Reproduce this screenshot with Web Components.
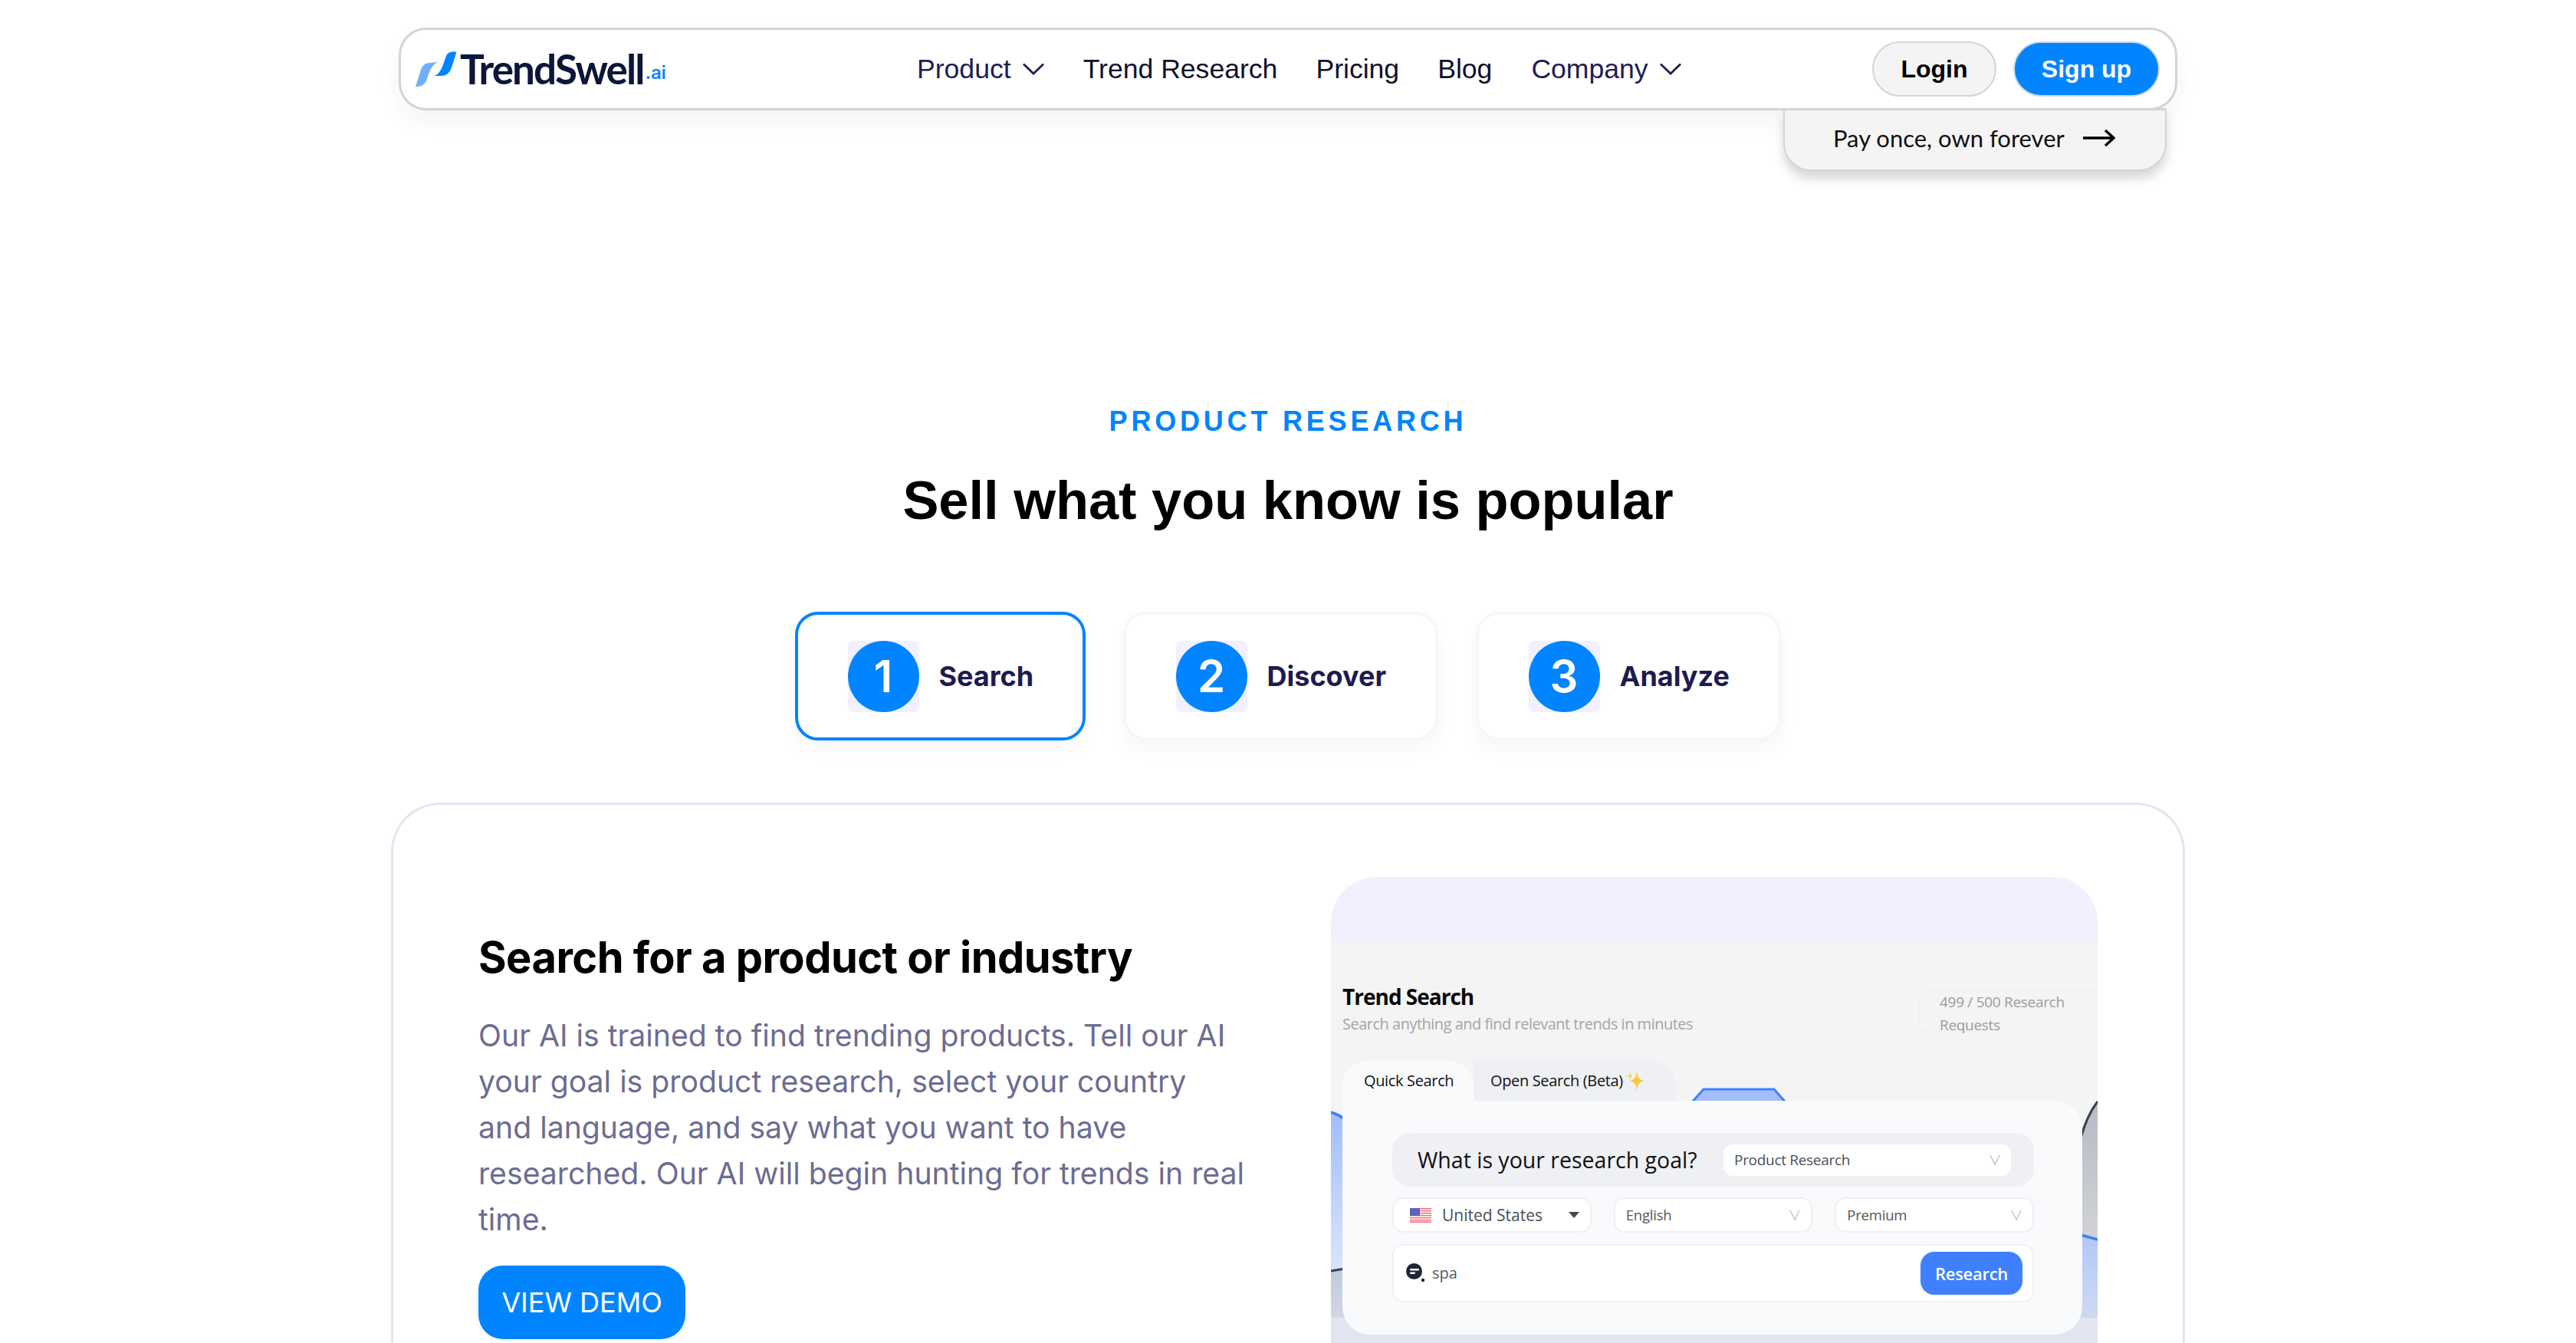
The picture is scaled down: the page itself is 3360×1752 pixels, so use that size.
<!DOCTYPE html>
<html lang="en">
<head>
<meta charset="utf-8">
<title>TrendSwell.ai</title>
<style>
html,body{margin:0;padding:0;background:#fff;height:1752px;overflow:hidden;}
body{font-family:"Liberation Sans",Arial,sans-serif;color:#000;}
</style>
</head>
<body>
<ts-page></ts-page>

<template id="t-logo">
<style>
:host{display:inline-flex;align-items:flex-start;height:46px;}
svg{display:block;width:55px;height:46px;flex:none;}
.n{font:700 53px/46px Lato,sans-serif;color:#0b1638;letter-spacing:-1.9px;margin-left:3px;white-space:nowrap;}
.a{font:600 24px/46px Inter,sans-serif;color:#0a84ff;margin-left:2px;position:relative;top:5px;letter-spacing:-.3px;}
</style>
<svg viewBox="0 0 55 46"><path fill="#6eb0ff" d="M0 46C6 46 12 45 15 36C18 27 21 17 29 14L18 15C12 15 9 19 7 24Z"/><path fill="#0084ff" d="M53.5.5C47 .5 43 0 40 6C37 13 34 30 24 32L33 32C42 32 46 26 48 18Z"/></svg>
<span class="n">TrendSwell</span><span class="a">.ai</span>
</template>

<template id="t-link">
<style>
:host{display:inline-flex;align-items:center;gap:14px;font:400 35.6px/44px "Liberation Sans",Arial,sans-serif;color:var(--c,#10102e);white-space:nowrap;}
svg{width:30px;height:18px;display:block;}
</style>
<slot></slot><svg id="c" viewBox="0 0 30 18" fill="none" stroke="currentColor" stroke-width="2.8"><path d="M2 2.5L15 15L28 2.5"/></svg>
</template>

<template id="t-btn">
<style>
:host{display:inline-flex;align-items:center;justify-content:center;box-sizing:border-box;height:72px;border-radius:36px;font:700 32px/40px "Liberation Sans",Arial,sans-serif;border:2.500px solid #d4d4d4;background:#f4f4f4;color:#000;white-space:nowrap;}
:host([primary]){background:#0084ff;color:#fff;border-color:#cfd9e6;}
</style>
<slot></slot>
</template>

<template id="t-nav">
<style>
:host{display:block;box-sizing:border-box;width:2320px;height:108px;margin:0 auto;position:relative;background:#fff;border:3px solid #d4d4d4;border-radius:36px;box-shadow:0 14px 30px rgba(30,30,80,.05);}
.bar{display:flex;align-items:center;height:100%;padding:0 20px 0 19px;position:relative;}
.links{position:absolute;left:673px;top:0;bottom:0;display:flex;align-items:center;gap:50px;}
.act{margin-left:auto;display:flex;gap:22px;}
.pop{position:absolute;left:1803px;top:102px;width:500px;height:82px;box-sizing:border-box;background:#f4f4f4;border:2px solid #d4d4d4;border-top-width:3px;border-radius:0 0 36px 36px;box-shadow:0 10px 14px rgba(0,0,0,.16);display:flex;align-items:center;padding:0 0 5px 63px;font:400 31px/40px Lato,sans-serif;color:#111;white-space:nowrap;}
.pop svg{width:42px;height:24px;margin-left:24px;display:block;}
</style>
<div class="bar">
<ts-logo></ts-logo>
<div class="links">
<ts-link caret style="--c:#221d52">Product</ts-link>
<ts-link>Trend Research</ts-link>
<ts-link>Pricing</ts-link>
<ts-link>Blog</ts-link>
<ts-link caret style="--c:#221d52;margin-left:1px">Company</ts-link>
</div>
<div class="act"><ts-btn style="width:162px">Login</ts-btn><ts-btn primary style="width:191px">Sign up</ts-btn></div>
</div>
<div class="pop">Pay once, own forever<svg viewBox="0 0 42 24" fill="none" stroke="#000" stroke-width="3.4"><path d="M0 12H39M29 2L40 12L29 22"/></svg></div>
</template>

<template id="t-step">
<style>
:host{display:flex;align-items:center;box-sizing:border-box;height:168px;background:#fff;border:4px solid #f6f6fc;border-radius:30px;box-shadow:0 12px 24px rgba(40,40,110,.04);padding:0 0 0 65px;gap:26px;font:700 36px/44px Inter,sans-serif;color:#1e1b4f;white-space:nowrap;}
:host([active]){border-color:#0084ff;}
.wrap{width:93px;height:93px;background:#f1f0fe;border-radius:8px;flex:none;}
.num{width:93px;height:93px;background:#0084ff;border-radius:50%;color:#fff;display:flex;align-items:center;justify-content:center;font:600 58px/60px Inter,sans-serif;}
</style>
<div class="wrap"><div class="num" id="n"></div></div><slot></slot>
</template>

<template id="t-steps">
<style>:host{display:flex;justify-content:center;}</style>
<ts-step n="1" active style="width:379px;margin-right:49px">Search</ts-step>
<ts-step n="2" style="width:411px;margin-right:49px">Discover</ts-step>
<ts-step n="3" style="width:399px">Analyze</ts-step>
</template>

<template id="t-intro">
<style>
:host{display:block;text-align:center;}
.k{font:700 36px/44px "Liberation Sans",Arial,sans-serif;color:#0084ff;letter-spacing:4.8px;}
h2{font:700 70.4px/80px "Liberation Sans",Arial,sans-serif;color:#000;margin:41px 0 0;}
</style>
<div class="k">PRODUCT RESEARCH</div>
<h2>Sell what you know is popular</h2>
</template>

<template id="t-select">
<style>
:host{display:flex;align-items:center;box-sizing:border-box;background:#fff;border:2px solid #eef0f4;border-radius:14px;height:46px;padding:0 14px;font:400 21px/30px "Open Sans","Noto Sans",sans-serif;color:#4a4f5a;white-space:nowrap;}
.sp{flex:1;}
svg{width:14px;height:22px;display:block;flex:none;}
</style>
<slot name="pre"></slot><slot></slot><span class="sp"></span><slot name="ic"><svg viewBox="0 0 14 22" fill="none" stroke="#c2c4c9" stroke-width="1.5"><path d="M1 5L7 17L13 5"/></svg></slot>
</template>

<template id="t-preview">
<style>
:host{display:flex;flex-direction:column;width:1000px;height:608px;border-radius:60px 60px 0 0;overflow:hidden;font-family:"Open Sans","Noto Sans",sans-serif;background:#f4f4f4;}
.band{height:85px;background:#f1f0fe;flex:none;}
.body{position:relative;padding:51px 0 0 15px;height:523px;box-sizing:border-box;overflow:hidden;}
.chart{position:absolute;left:0;top:0;width:1000px;height:560px;display:block;}
.head{display:flex;position:relative;align-items:flex-start;}
.t{font:700 28px/40px "Open Sans",sans-serif;color:#0a0a0a;letter-spacing:-1px;}
.s{font:400 20px/30px "Open Sans",sans-serif;color:#a4a4a8;margin-top:1px;letter-spacing:-.5px;white-space:nowrap;}
.badge{position:absolute;left:751px;top:13px;width:234px;height:55px;box-sizing:border-box;border:2px solid #eef0f4;border-right:0;border-radius:12px 0 0 12px;padding:0 0 0 26px;font:400 19px/30px "Open Sans",sans-serif;color:#9a9a9e;letter-spacing:-.3px;margin-top:-1px;white-space:normal;}
.badge div{width:190px;margin-top:-2px;}
.tabs{display:flex;margin-top:33px;position:relative;height:52px;font:500 20px/52px "Open Sans",sans-serif;color:#111;letter-spacing:-.35px;white-space:nowrap;}
.tab{background:#eef0f3;border-radius:0 32px 0 0;padding:0 0 0 22px;width:264px;box-sizing:border-box;display:flex;align-items:center;gap:4px;}
.tab.on{background:#f9fafc;border-radius:32px 32px 0 0;width:171px;padding:0 0 0 28px;}
.tab svg{width:24px;height:28px;display:block;}
.card{position:relative;width:965px;height:305px;box-sizing:border-box;background:#f9fafc;border-radius:0 36px 36px 36px;padding:42px 63px 42px 65px;display:flex;flex-direction:column;}
.goal{height:70px;background:#eef0f3;border-radius:24px;display:flex;align-items:center;padding:0 28px 0 33px;font:500 28.5px/40px "Open Sans",sans-serif;color:#111;white-space:nowrap;}
.goal ts-select{margin-left:auto;width:379px;height:45px;font-size:19px;letter-spacing:-.3px;border-color:#f0f1f4;}
.row{display:grid;grid-template-columns:repeat(3,1fr);gap:29px;margin-top:14px;}
.row .sm{font-size:18.5px;letter-spacing:-.2px;color:#555;}
.search{margin-top:15px;height:76px;background:#fff;border:2px solid #eff2f7;border-radius:14px;box-sizing:border-box;display:flex;align-items:center;padding:0 13px 0 16px;font:400 20px/30px "Open Sans",sans-serif;color:#555a64;}
.search svg{width:24px;height:26px;display:block;margin-right:10px;}
.go{margin-left:auto;width:133px;height:56px;background:#4080ff;border-radius:18px;color:#fff;font:600 22px/56px "Open Sans",sans-serif;text-align:center;letter-spacing:-.3px;box-shadow:0 1px 3px rgba(0,0,0,.08);}
</style>
<div class="band"></div>
<div class="body">
<svg class="chart" viewBox="0 0 1000 560" preserveAspectRatio="none">
<defs>
<linearGradient id="gb" x1="0" y1="0" x2="0" y2="1"><stop offset="0" stop-color="#a2bdfc"/><stop offset="1" stop-color="#dbe5fb"/></linearGradient>
<linearGradient id="gg" x1="0" y1="0" x2="0" y2="1"><stop offset="0" stop-color="#c0c8d7"/><stop offset="1" stop-color="#e4e7f1"/></linearGradient>
<linearGradient id="gr" x1="0" y1="0" x2="0" y2="1"><stop offset="0" stop-color="#b5bac5"/><stop offset="1" stop-color="#d2d3d6"/></linearGradient>
<linearGradient id="gr2" x1="0" y1="0" x2="0" y2="1"><stop offset="0" stop-color="#b3c8f8"/><stop offset="1" stop-color="#e0e4ef"/></linearGradient>
</defs>
<path fill="#a3bdfb" stroke="#4080ff" stroke-width="3" d="M470 210L486 192H578L594 210Z"/>
<path fill="url(#gb)" d="M0 222L20 232V430L0 430Z"/>
<path fill="url(#gg)" d="M0 429L20 425V560H0Z"/>
<path fill="none" stroke="#3f7dfb" stroke-width="3.5" d="M0 222Q10 225 18 231"/>
<path fill="none" stroke="#36415a" stroke-width="3" d="M0 429L18 426"/>
<path fill="url(#gr)" d="M1000 208Q985 225 975 260V382L1000 388Z"/>
<path fill="none" stroke="#3a3f4a" stroke-width="3" d="M1000 208Q986 226 978 256"/>
<path fill="url(#gr2)" d="M975 381L1000 388V560H975Z"/>
<path fill="none" stroke="#3f7dfb" stroke-width="3.5" d="M978 382L1000 388"/>
<rect x="0" y="490" width="1000" height="70" fill="#e1e5f0"/>
</svg>
<div class="head"><div><div class="t">Trend Search</div><div class="s">Search anything and find relevant trends in minutes</div></div>
<div class="badge"><div>499 / 500 Research Requests</div></div></div>
<div class="tabs"><div class="tab on">Quick Search</div><div class="tab">Open Search (Beta)<svg viewBox="0 0 24 28"><path fill="#fcc63f" d="M14 1C15 10 17 12 23 14C17 16 15 18 14 27C13 18 11 16 5 14C11 12 13 10 14 1Z"/><path fill="#fbd76a" d="M5 3C5.500 6 6.500 7 9 8C6.500 9 5.500 10 5 13C4.500 10 3.500 9 1 8C3.500 7 4.500 6 5 3Z"/></svg></div></div>
<div class="card">
<div class="goal">What is your research goal?<ts-select>Product Research</ts-select></div>
<div class="row">
<ts-select style="padding:0 14px 0 16px"><svg slot="pre" viewBox="0 0 28 19" style="width:28px;height:19px;display:block;margin:0 14px 0 5px;flex:none"><rect width="28" height="19" fill="#fff"/><g fill="#f26d7d"><rect width="28" height="1.500"/><rect y="3" width="28" height="1.500"/><rect y="6" width="28" height="1.500"/><rect y="9" width="28" height="1.500"/><rect y="12" width="28" height="1.500"/><rect y="15" width="28" height="1.500"/><rect y="17.500" width="28" height="1.500"/></g><rect width="13" height="10" fill="#5f63b8"/></svg>United States<svg slot="ic" viewBox="0 0 14 22" style="width:14px;height:22px;display:block;flex:none"><path fill="#44474f" d="M0 7H14L7 15Z"/></svg></ts-select>
<ts-select class="sm">English</ts-select>
<ts-select class="sm">Premium</ts-select>
</div>
<div class="search"><svg viewBox="0 0 24 26"><circle cx="10.500" cy="10.500" r="10.500" fill="#1d2536"/><rect x="5" y="7" width="12" height="2.500" rx="1.200" fill="#fff"/><rect x="5" y="11.500" width="7" height="2.500" rx="1.200" fill="#fff"/><circle cx="22" cy="22" r="2.200" fill="#1d2536"/></svg>spa<div class="go">Research</div></div>
</div>
</div>
</template>

<template id="t-feature">
<style>
:host{display:grid;grid-template-columns:1112px 1000px;box-sizing:border-box;width:2340px;height:705px;margin:0 auto;background:#fff;border:3px solid #e6e4f4;border-bottom:0;border-radius:64px 64px 0 0;padding:94px 111px 0 111px;overflow:hidden;}
.l{padding-top:69px;}
h3{font:700 56px/72px Inter,sans-serif;color:#000;margin:0;letter-spacing:-.55px;white-space:nowrap;}
p{font:400 39.2px/60px Inter,sans-serif;color:#6c6c92;margin:36px 0 0;width:1002px;}
.b{display:inline-flex;align-items:center;justify-content:center;width:270px;height:96px;background:#0084ff;border-radius:32px;color:#fff;font:400 36px/44px Inter,sans-serif;margin-top:30px;}
</style>
<div class="l">
<h3>Search for a product or industry</h3>
<p>Our AI is trained to find trending products. Tell our AI your goal is product research, select your country and language, and say what you want to have researched. Our AI will begin hunting for trends in real time.</p>
<div class="b">VIEW DEMO</div>
</div>
<ts-preview></ts-preview>
</template>

<template id="t-page">
<style>
:host{display:block;width:3360px;height:1752px;padding-top:36px;box-sizing:border-box;}
ts-intro{margin-top:384px;}
ts-steps{margin-top:105px;}
ts-feature{margin-top:81px;}
</style>
<ts-nav></ts-nav>
<ts-intro></ts-intro>
<ts-steps></ts-steps>
<ts-feature></ts-feature>
</template>

<script>
function def(name,tid,init){
  customElements.define(name,class extends HTMLElement{
    constructor(){super();const r=this.attachShadow({mode:'open'});r.appendChild(document.getElementById(tid).content.cloneNode(true));}
    connectedCallback(){if(init)init(this,this.shadowRoot);}
  });
}
def('ts-logo','t-logo');
def('ts-link','t-link',(h,r)=>{if(!h.hasAttribute('caret'))r.getElementById('c').remove();});
def('ts-btn','t-btn');
def('ts-nav','t-nav');
def('ts-step','t-step',(h,r)=>{r.getElementById('n').textContent=h.getAttribute('n');});
def('ts-steps','t-steps');
def('ts-intro','t-intro');
def('ts-select','t-select');
def('ts-preview','t-preview');
def('ts-feature','t-feature');
def('ts-page','t-page');
</script>
</body>
</html>
